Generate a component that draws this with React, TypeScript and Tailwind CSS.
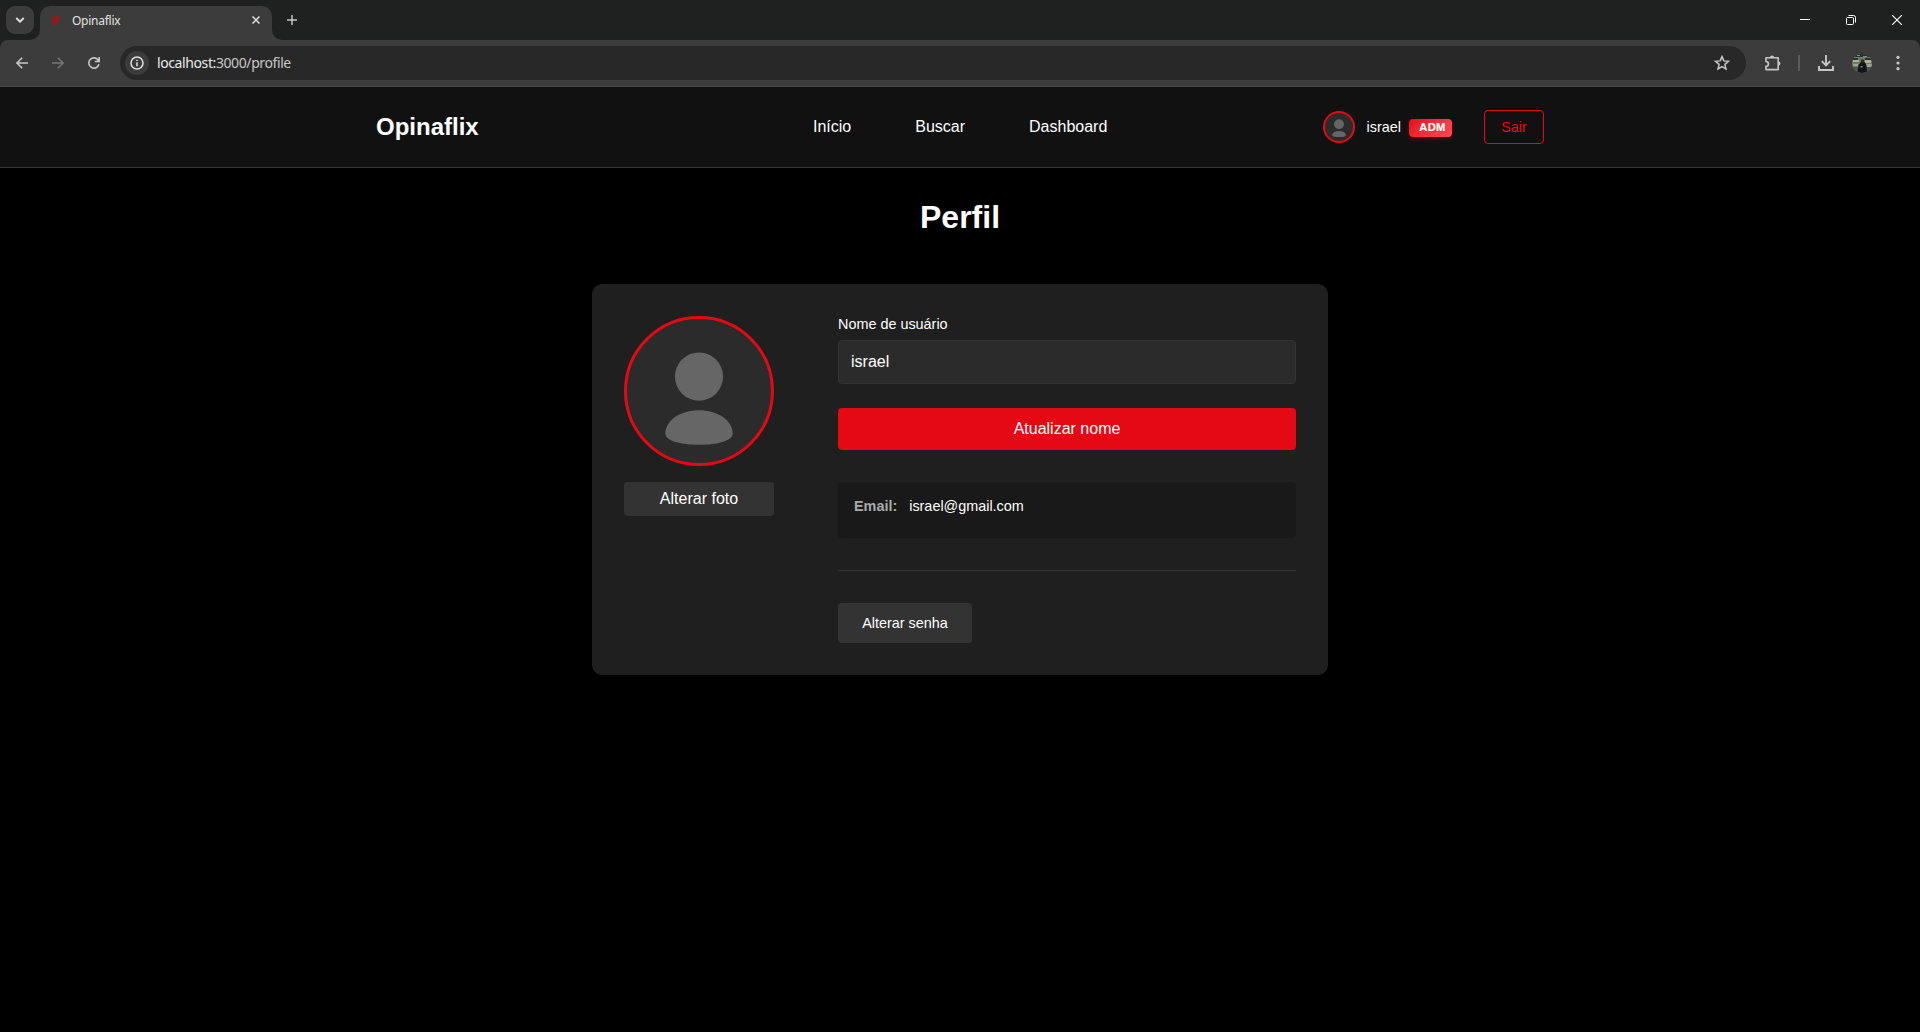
import React from "react";

const ui = "font-['Noto_Sans','Open_Sans',sans-serif]";

function TabStrip() {
  return (
    <div className="flex h-10 bg-[#1f2120] text-[#e3e3e3]">
      <div className="mt-1.5 ml-1.5 flex h-7 w-7 items-center justify-center rounded-[9px] bg-[#3c3c3c]">
        <svg width="10" height="8" viewBox="0 0 10 8" fill="none" stroke="#e3e3e3" strokeWidth="1.8"><path d="M1.3 2 5 5.7 8.7 2" /></svg>
      </div>
      <svg className="mt-[30px] -ml-1 shrink-0" width="10" height="10" viewBox="0 0 10 10"><path d="M10 0V10H0A10 10 0 0 0 10 0Z" fill="#3c3c3c" /></svg>
      <div className={`mt-1.5 flex h-[34px] w-[232px] items-center rounded-t-[10px] bg-[#3c3c3c] pb-[6px] ${ui}`}>
        <svg className="ml-[12px]" width="8" height="9" viewBox="0 0 8 9" fill="none" stroke="#c40812" strokeWidth="1.1"><path d="M2.8 .9H1.6L.7 1.8V7.2l.9.9H3.2V.9M4.7 8.2V.9H6.5l.8.8V3.9l-.8.9H4.8" /></svg>
        <span className="mt-[2px] ml-[12px] flex-1 text-[12px] leading-[16px] tracking-[-0.25px]">Opinaflix</span>
        <svg className="mr-[12px]" width="8" height="8" viewBox="0 0 8 8" stroke="#e3e3e3" strokeWidth="1.5"><path d="M.5.5 7.5 7.5M7.5.5.5 7.5" /></svg>
      </div>
      <svg className="mt-[30px] shrink-0" width="10" height="10" viewBox="0 0 10 10"><path d="M0 0V10H10A10 10 0 0 1 0 0Z" fill="#3c3c3c" /></svg>
      <svg className="mt-[15px] ml-[5px]" width="10" height="10" viewBox="0 0 10 10" stroke="#c7c7c7" strokeWidth="1.5"><path d="M5 0V10M0 5H10" /></svg>
      <div className="ml-auto flex items-center">
        <svg width="10" height="10" viewBox="0 0 10 10" stroke="#fff"><path d="M0 4.5H10" /></svg>
        <svg className="ml-9" width="10" height="10" viewBox="0 0 10 10" fill="none" stroke="#fff"><rect x=".5" y="2.5" width="7" height="7" rx="1" /><path d="M2.5.5H7.5a2 2 0 0 1 2 2V7.5" /></svg>
        <svg className="mr-[18px] ml-9" width="10" height="10" viewBox="0 0 10 10" stroke="#fff" strokeWidth="1.1"><path d="M0 0 10 10M10 0 0 10" /></svg>
      </div>
    </div>
  );
}

function Toolbar() {
  return (
    <div className="bg-[#1f2120]">
      <div className="flex h-[47px] items-center rounded-t-[8px] border-b border-[#4a4a4a] bg-[#3c3c3c]">
        <svg className="ml-4" width="12" height="12" viewBox="0 0 12 12" fill="none" stroke="#c7c7c7" strokeWidth="1.6"><path d="M12 6H1.2M6.2.7.9 6l5.3 5.3" /></svg>
        <svg className="ml-6" width="12" height="12" viewBox="0 0 12 12" fill="none" stroke="#757575" strokeWidth="1.6"><path d="M0 6H10.8M5.8.7 11.1 6l-5.3 5.3" /></svg>
        <svg className="ml-6" width="12" height="12" viewBox="0 0 12 12" fill="none" stroke="#c7c7c7" strokeWidth="1.6"><path d="M10.9 7.2A5.1 5.1 0 1 1 10.2 3.2L11.2 4.4M11.2 0V4.5H6.8" /></svg>
        <div className="ml-[20px] flex h-[34px] w-[1626px] items-center rounded-full bg-[#282828]">
          <div className="ml-[5px] flex h-6 w-6 items-center justify-center rounded-full bg-[#3c3c3c]">
            <svg width="14" height="14" viewBox="0 0 14 14" fill="none" stroke="#e3e3e3" strokeWidth="1.5"><circle cx="7" cy="7" r="6" /><path d="M7 6.3V10.2M7 3.7V5.1" /></svg>
          </div>
          <span className={`ml-[8px] text-[14px] leading-5 tracking-[-0.4px] text-[#c7c7c7] ${ui}`}><span className="text-[#e8e8e8]">localhost:</span>3000/profile</span>
          <svg className="mr-4 ml-auto" width="16" height="16" viewBox="0 0 16 16" fill="none" stroke="#c7c7c7" strokeWidth="1.5"><path d="m8 1.6 1.8 4.3 4.7.4-3.6 3 1.1 4.6L8 11.5l-4 2.4 1.1-4.6-3.6-3 4.7-.4Z" /></svg>
        </div>
        <svg className="ml-[18px]" width="18" height="18" viewBox="0 0 18 18"><path d="M6 3.6a2.1 2.1 0 0 1 4.2 0ZM14.4 7.5a2.1 2.1 0 0 1 0 4.2Z" fill="#c7c7c7" /><path d="M2 3.8H14.2V15.6H2V12.3A2.4 2.4 0 0 0 2 7.5Z" fill="none" stroke="#c7c7c7" strokeWidth="1.6" strokeLinejoin="round" /></svg>
        <div className="ml-[16px] h-4 w-[2px] bg-[#5c5c5c]" />
        <svg className="ml-[18px]" width="16" height="16" viewBox="0 0 16 16" fill="none" stroke="#c7c7c7" strokeWidth="1.9"><path d="M8 0V10M3.8 6.2 8 10.4l4.2-4.2M1 11V15H15V11" /></svg>
        <svg className="ml-[18px]" width="20" height="20" viewBox="0 0 20 20">
          <defs><clipPath id="face"><circle cx="10" cy="10" r="10" /></clipPath></defs>
          <g clipPath="url(#face)">
            <path fill="#6d7a6a" d="M0 0H20V20H0z" />
            <path fill="#2a302d" d="M0 0H20V4H0zM1 5h5v2H1zM13 5h6v2h-6z" />
            <path fill="#858a86" d="M5 2h3v1H5zM11 3h4v1h-4z" />
            <path fill="#aeb391" d="M1 7h6v2H1zM13 7h6v3h-6z" />
            <path fill="#4d534c" d="M0 14H20V20H0z" />
            <path fill="#9ea595" d="M1 11h5v2H1zM14 11h6v3h-6z" />
            <path fill="#111519" d="M5.5 20 6.5 12 9 9h3.5l2 3 .5 8z" />
            <circle cx="10.5" cy="8" r="1.8" fill="#382d28" />
            <path fill="#a77959" d="M8.5 13h2v1.5h-2z" />
          </g>
        </svg>
        <svg className="ml-6" width="4" height="16" viewBox="0 0 4 16" fill="#c7c7c7"><circle cx="2" cy="2.3" r="1.6" /><circle cx="2" cy="8" r="1.6" /><circle cx="2" cy="13.7" r="1.6" /></svg>
      </div>
    </div>
  );
}

function SiteHeader() {
  return (
    <header className="h-[81px] border-b border-[#333] bg-[#111]">
      <div className="mx-auto flex h-20 w-[1168px] items-center justify-between">
        <h1 className="w-[160px] text-2xl font-bold">Opinaflix</h1>
        <nav className="ml-[277px] flex gap-16 text-base">
          <a>Início</a><a>Buscar</a><a>Dashboard</a>
        </nav>
        <div className="ml-auto flex items-center">
          <div className="flex h-8 w-8 items-center justify-center rounded-full border-2 border-[#e50914] bg-[#2b2b2b]">
            <svg width="28" height="28" viewBox="0 0 28 28" fill="#666"><circle cx="14" cy="11.2" r="4.9" /><path d="M7.2 22.2C7.2 19.6 10.2 18 14 18s6.8 1.6 6.8 4.2C20.8 23.6 17.5 24 14 24s-6.8-.4-6.8-1.8Z" /></svg>
          </div>
          <span className="ml-3 pt-0.5 text-[14.4px]">israel</span>
          <span className="mt-0.5 ml-2 flex h-[18px] w-[43px] items-center justify-center rounded bg-linear-135 from-[#e50914] to-[#ff4757] pl-1 text-[11.2px] leading-none font-bold tracking-[0.4px] shadow-[0_2px_4px_rgba(229,9,20,0.3)] [-webkit-text-stroke:0.2px_#fff]">ADM</span>
          <button className="ml-8 h-[34px] w-[60px] rounded border border-[#e50914] pt-0.5 text-[14.4px] text-[#e50914]">Sair</button>
        </div>
      </div>
    </header>
  );
}

function ProfileCard() {
  return (
    <section className="mx-auto mt-[49px] flex h-[391px] w-[736px] gap-16 rounded-[10px] bg-[#1f1f1f] p-8">
      <div className="w-[150px]">
        <div className="h-[150px] w-[150px] overflow-hidden rounded-full border-3 border-[#e50914] bg-[#2b2b2b]">
          <svg width="144" height="144" viewBox="0 0 144 144" fill="#666"><circle cx="72" cy="57.6" r="24.1" /><path d="M38.3 114.5C38.3 101 54 91.2 72 91.2s33.7 9.8 33.7 23.3C105.7 122 90 125.8 72 125.8s-33.7-3.8-33.7-11.3Z" /></svg>
        </div>
        <button className="mt-4 h-[34px] w-full rounded bg-[#333] pb-px text-base">Alterar foto</button>
      </div>
      <div className="flex w-[458px] flex-col">
        <label className="h-6 text-[14.4px] leading-4">Nome de usuário</label>
        <input defaultValue="israel" className="h-11 rounded border border-[#333] bg-[#2b2b2b] px-3 text-base outline-none" />
        <button className="mt-6 h-[42px] rounded bg-[#e50914] pb-px text-base">Atualizar nome</button>
        <div className="mt-8 flex h-14 gap-3 rounded bg-[#191919] px-4 pt-4 text-[14.4px] leading-4">
          <span className="font-bold text-[#aaa]">Email:</span><span>israel@gmail.com</span>
        </div>
        <div className="mt-8 border-t border-[#333] pt-8">
          <button className="h-10 w-[134px] rounded bg-[#333] pt-0.5 text-[14.4px]">Alterar senha</button>
        </div>
      </div>
    </section>
  );
}

export default function App() {
  return (
    <div className="h-[1032px] overflow-hidden bg-black font-['Liberation_Sans',Arial,sans-serif] text-white">
      <TabStrip />
      <Toolbar />
      <SiteHeader />
      <main className="pt-[31px]">
        <h2 className="h-9 text-center text-[32px] leading-[36px] font-bold">Perfil</h2>
        <ProfileCard />
      </main>
    </div>
  );
}
